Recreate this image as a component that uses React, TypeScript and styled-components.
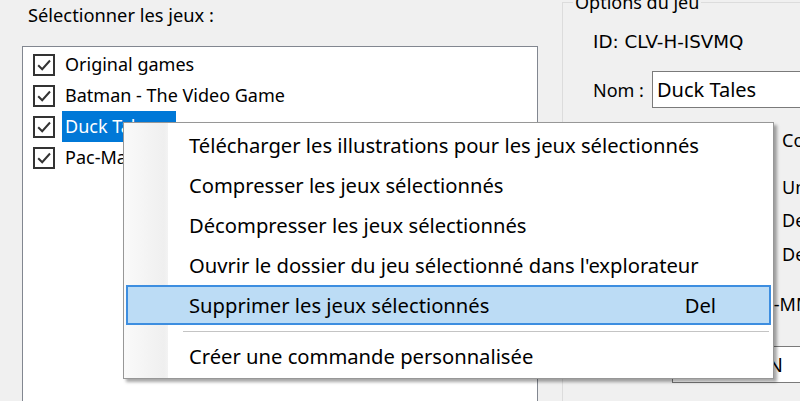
import React from "react";
import styled, { createGlobalStyle } from "styled-components";

const Global = createGlobalStyle`
  html, body { margin: 0; padding: 0; background: #f0f0f0; }
  body {
    font-family: "Noto Sans", "Open Sans", sans-serif;
    font-size: 18px;
    color: #000;
    overflow: hidden;
  }
`;

const Window = styled.div`
  position: relative;
  width: 800px;
  height: 401px;
  overflow: hidden;
  display: flex;
  background: #f0f0f0;
`;

const LeftPane = styled.div`
  width: 538px;
  flex-shrink: 0;
  box-sizing: border-box;
  padding-left: 22px;
  display: flex;
  flex-direction: column;
`;

const PaneLabel = styled.div`
  height: 46px;
  box-sizing: border-box;
  padding: 3px 0 0 6px;
  line-height: 23px;
  font-size: 18.3px;
`;

const ListBox = styled.div`
  flex: 1;
  background: #fff;
  border: 1px solid #828790;
  border-bottom: none;
  padding: 2px 0 0 10px;
  display: flex;
  flex-direction: column;
`;

const ListRow = styled.div`
  height: 31px;
  display: flex;
  align-items: center;
`;

const CheckBox = styled.span`
  width: 22px;
  height: 22px;
  box-sizing: border-box;
  border: 2px solid #333;
  background: #fff;
  margin-right: 7px;
  display: flex;
  align-items: center;
  justify-content: center;
  flex-shrink: 0;
`;

const ItemText = styled.span<{ $selected?: boolean }>`
  height: 31px;
  line-height: 31px;
  padding: 0 ${(p) => (p.$selected ? 22 : 3)}px 0 3px;
  white-space: nowrap;
  background: ${(p) => (p.$selected ? "#0078d7" : "transparent")};
  color: ${(p) => (p.$selected ? "#fff" : "#000")};
`;

const RightPane = styled.div`
  flex: 1;
  min-width: 0;
  padding-left: 24px;
`;

const GroupBox = styled.fieldset`
  margin: -9px 0 0 0;
  padding: 0 0 0 10px;
  width: 320px;
  height: 440px;
  box-sizing: border-box;
  border: 1px solid #dcdcdc;
  border-right: none;
  border-bottom: none;
  min-width: 0;
`;

const Legend = styled.legend`
  padding: 0 2px;
  line-height: 23px;
`;

const GroupBody = styled.div`
  padding-left: 20px;
  display: flex;
  flex-direction: column;
`;

const InfoLine = styled.div`
  margin-top: 16px;
  line-height: 23px;
  font-family: "DejaVu Sans", "Noto Sans", sans-serif;
  font-size: 18.3px;
  white-space: nowrap;
`;

const FieldRow = styled.div<{ $top: number }>`
  margin-top: ${(p) => p.$top}px;
  display: flex;
  align-items: center;
  white-space: nowrap;
`;

const FieldLabel = styled.span<{ $width: number }>`
  width: ${(p) => p.$width}px;
  flex-shrink: 0;
`;

const TextBox = styled.div<{ $indent: number }>`
  height: 37px;
  box-sizing: border-box;
  flex: 1;
  min-width: 200px;
  border: 1px solid #7a7a7a;
  background: #fff;
  display: flex;
  align-items: center;
  padding-left: ${(p) => p.$indent}px;
  font-size: 20px;
  white-space: nowrap;
`;

const OptionLine = styled.div<{ $top: number; $indent: number }>`
  margin-top: ${(p) => p.$top}px;
  padding-left: ${(p) => p.$indent}px;
  line-height: 23px;
  white-space: nowrap;
`;

const Menu = styled.div`
  position: absolute;
  left: 123px;
  top: 122px;
  width: 651px;
  box-sizing: border-box;
  border: 1px solid #979797;
  padding: 2px;
  font-size: 20.2px;
  background: linear-gradient(
    to right,
    #fafafa 0px,
    #efefef 40px,
    #f3f3f3 44px,
    #ffffff 44px
  );
  box-shadow: 3px 3px 3px rgba(0, 0, 0, 0.35);
  display: flex;
  flex-direction: column;
`;

const MenuItem = styled.div<{ $active?: boolean }>`
  height: 40px;
  box-sizing: border-box;
  display: flex;
  align-items: center;
  padding-left: 61px;
  border: 2px solid ${(p) => (p.$active ? "#3d8ee0" : "transparent")};
  background: ${(p) => (p.$active ? "#bcdcf5" : "transparent")};
  white-space: nowrap;
`;

const Shortcut = styled.span`
  margin-left: auto;
  margin-right: 53px;
`;

const MenuSeparator = styled.div`
  height: 11px;
  box-sizing: border-box;
  margin: 0 2px 0 57px;
  padding-top: 6px;
  &::after {
    content: "";
    display: block;
    border-top: 1px solid #c4c4c4;
  }
`;

const Check = () => (
  <svg width="16" height="16" viewBox="0 0 16 16">
    <path d="M2.2 8.3 L6.2 12.2 L14 3.5" fill="none" stroke="#333" strokeWidth="2" />
  </svg>
);

const games = [
  "Original games",
  "Batman - The Video Game",
  "Duck Tales",
  "Pac-Man",
];

const menuItems = [
  { label: "Télécharger les illustrations pour les jeux sélectionnés" },
  { label: "Compresser les jeux sélectionnés" },
  { label: "Décompresser les jeux sélectionnés" },
  { label: "Ouvrir le dossier du jeu sélectionné dans l'explorateur" },
  { label: "Supprimer les jeux sélectionnés", shortcut: "Del", active: true },
];

export default function App() {
  return (
    <>
      <Global />
      <Window>
        <LeftPane>
          <PaneLabel>Sélectionner les jeux :</PaneLabel>
          <ListBox>
            {games.map((g, i) => (
              <ListRow key={g}>
                <CheckBox>
                  <Check />
                </CheckBox>
                <ItemText $selected={i === 2}>{g}</ItemText>
              </ListRow>
            ))}
          </ListBox>
        </LeftPane>
        <RightPane>
          <GroupBox>
            <Legend>Options du jeu</Legend>
            <GroupBody>
              <InfoLine>ID: CLV-H-ISVMQ</InfoLine>
              <FieldRow $top={18}>
                <FieldLabel $width={59}>Nom :</FieldLabel>
                <TextBox $indent={4}>Duck Tales</TextBox>
              </FieldRow>
              <OptionLine $top={21} $indent={189}>Compressé</OptionLine>
              <OptionLine $top={24} $indent={189}>Un joueur</OptionLine>
              <OptionLine $top={10} $indent={189}>Deux joueurs, alternativement</OptionLine>
              <OptionLine $top={11} $indent={189}>Deux joueurs, simultanément</OptionLine>
              <OptionLine $top={27} $indent={6}>Date de sortie (AAAA-MM-JJ) :</OptionLine>
              <FieldRow $top={30}>
                <FieldLabel $width={79} />
                <TextBox $indent={6}>CAPCOM N</TextBox>
              </FieldRow>
            </GroupBody>
          </GroupBox>
        </RightPane>
        <Menu>
          {menuItems.map((m) => (
            <MenuItem key={m.label} $active={m.active}>
              {m.label}
              {m.shortcut && <Shortcut>{m.shortcut}</Shortcut>}
            </MenuItem>
          ))}
          <MenuSeparator />
          <MenuItem>Créer une commande personnalisée</MenuItem>
        </Menu>
      </Window>
    </>
  );
}
